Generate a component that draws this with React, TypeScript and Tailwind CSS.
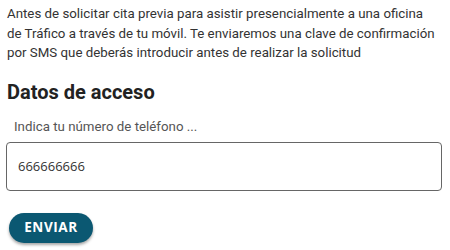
import React, { useState } from 'react';

const App: React.FC = () => {
  const [phone, setPhone] = useState('666666666');

  return (
    <div className="w-[450px] h-[250px] bg-white px-[7px] pt-[4px] font-['Roboto',sans-serif] text-[#333] overflow-hidden">
      <p className="text-[13.3px] leading-[19.5px] text-[#333] whitespace-nowrap">
        Antes de solicitar cita previa para asistir presencialmente a una oficina
        <br />
        de Tráfico a través de tu móvil. Te enviaremos una clave de confirmación
        <br />
        por SMS que deberás introducir antes de realizar la solicitud
      </p>

      <h2 className="mt-[16px] text-[20px] leading-[26px] font-bold text-[#222]">Datos de acceso</h2>

      {/* Phone field */}
      <label className="block mt-[13px] ml-[7px] text-[13.3px] leading-[18px] text-[#555]">
        Indica tu número de teléfono ...
      </label>
      <input
        value={phone}
        onChange={e => setPhone(e.target.value)}
        className="block mt-[6px] -ml-[1px] w-[436px] h-[49px] px-[11px] border border-[#666] rounded-[4px] text-[13px] text-[#333] font-['Open_Sans',sans-serif] outline-none"
      />

      <button className="block mt-[22px] ml-[2px] w-[84px] h-[30px] rounded-full bg-[#0b5872] text-white text-[13.5px] font-bold tracking-[0.6px] shadow-[0_2px_3px_rgba(0,0,0,0.35)] font-['Open_Sans',sans-serif]">
        ENVIAR
      </button>
    </div>
  );
};

export default App;
